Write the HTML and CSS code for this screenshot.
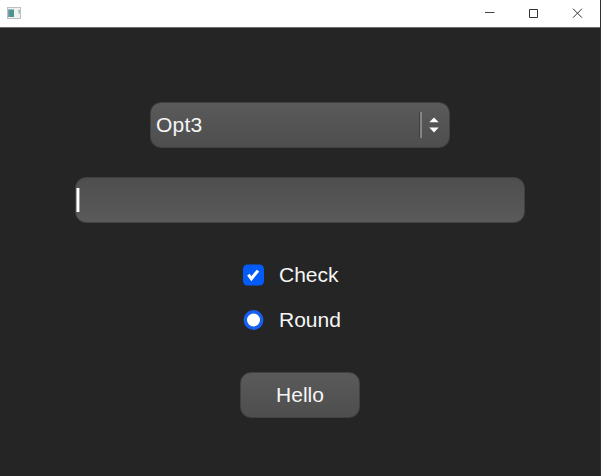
FILE: index.html
```html
<!DOCTYPE html>
<html lang="en">
<head>
<meta charset="utf-8">
<title>Hello</title>
<link rel="stylesheet" href="styles.css">
</head>
<body>
<div class="window">
  <header class="titlebar">
    <svg class="app-icon" width="14" height="12" viewBox="0 0 14 12">
      <rect x=".5" y=".5" width="13" height="11" fill="#eef0f2" stroke="#bcc0c6"/>
      <rect x="1.5" y="2.5" width="5.5" height="7.5" fill="#4c9488"/>
      <rect x="1" y="2.5" width="1.5" height="7.5" fill="#7f98b5"/>
      <path d="M11.2 3h1.6v3.6h-1z" fill="#82b8a0"/>
    </svg>
    <div class="controls">
      <svg width="44" height="27" viewBox="0 0 44 27"><path d="M17 12.5h9.5" stroke="#444"/></svg>
      <svg width="44" height="27" viewBox="0 0 44 27"><path d="M17.5 9.5h8v8h-8z" fill="none" stroke="#333"/></svg>
      <svg width="44" height="27" viewBox="0 0 44 27"><path d="M17 8.7l9 9M26 8.7l-9 9" stroke="#333"/></svg>
    </div>
  </header>
  <main class="content">
    <div class="field select">
      <span class="value">Opt3</span>
      <span class="divider"></span>
      <svg class="arrows" width="10" height="16" viewBox="0 0 10 16"><path d="M.3 5.2L5 .4l4.7 4.8zM.3 10.6h9.4L5 15.4z" fill="#fff"/></svg>
    </div>
    <div class="field input"><span class="caret"></span></div>
    <div class="options">
      <div class="option">
        <svg width="21" height="22" viewBox="0 0 21 22"><rect y=".5" width="21" height="21" rx="4.5" fill="#045cf8"/><path d="M5.4 10.6l3 4.2 6.6-8.2" fill="none" stroke="#fff" stroke-width="3.1"/></svg>
        <span>Check</span>
      </div>
      <div class="option">
        <svg width="21" height="22" viewBox="0 0 21 22"><circle cx="10.5" cy="11" r="10" fill="#1560ee"/><circle cx="10.5" cy="11" r="6.5" fill="#fff"/></svg>
        <span>Round</span>
      </div>
    </div>
    <div class="field button">Hello</div>
  </main>
</div>
</body>
</html>
```
FILE: styles.css
```css
* { box-sizing: border-box; }
body {
  margin: 0;
  background: #252525;
  font-family: "Liberation Sans", Arial, sans-serif;
  font-size: 21px;
  color: #f6f6f6;
}
.window {
  height: 476px;
  overflow: hidden;
  border-right: 1px solid #303030;
  background: #252525;
}
.titlebar {
  display: flex;
  justify-content: space-between;
  height: 28px;
  padding: 0 0 0 7px;
  background: #fff;
  border-bottom: 1px solid #6c6c6c;
}
.app-icon { margin-top: 7px; }
.controls { display: flex; }
.content {
  display: flex;
  flex-direction: column;
  align-items: center;
  padding-top: 74px;
}
.field {
  display: flex;
  align-items: center;
  height: 46px;
  border: 1px solid #414141;
  border-radius: 11px;
  background: linear-gradient(#5a5a5a, #4e4e4e);
}
.select { width: 300px; padding: 0 10px 0 5px; }
.value { flex: 1; letter-spacing: 0.2px; }
.divider {
  width: 3px;
  height: 26px;
  margin-right: 7px;
  background: linear-gradient(90deg, #3e3e3e 1px, #858585 1px);
}
.input {
  width: 450px;
  margin-top: 29px;
  background: linear-gradient(#4e4e4e, #5a5a5a);
}
.caret {
  width: 4px;
  height: 24px;
  background: linear-gradient(90deg, #aaa 1px, #fff 1px 3px, #999 3px);
}
.options {
  display: flex;
  flex-direction: column;
  gap: 23px;
  width: 114px;
  margin-top: 41px;
}
.option {
  display: flex;
  align-items: center;
  gap: 15px;
  height: 22px;
  width: 114px;
}
.button {
  justify-content: center;
  width: 120px;
  margin-top: 41px;
}
```
